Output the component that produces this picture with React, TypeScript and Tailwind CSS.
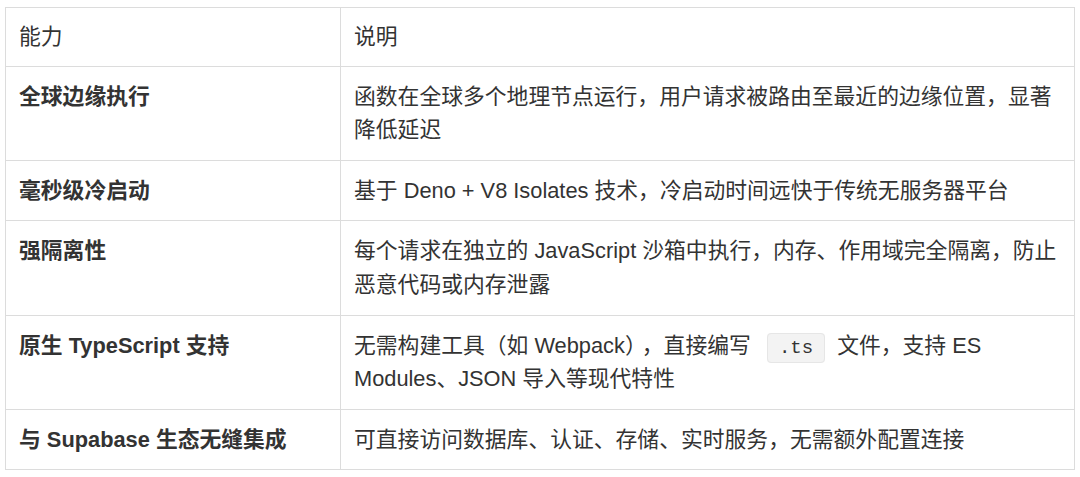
import type { ReactNode } from 'react'

const rows: { name: string; desc: ReactNode }[] = [
  {
    name: '全球边缘执行',
    desc: '函数在全球多个地理节点运行，用户请求被路由至最近的边缘位置，显著降低延迟',
  },
  {
    name: '毫秒级冷启动',
    desc: '基于 Deno + V8 Isolates 技术，冷启动时间远快于传统无服务器平台',
  },
  {
    name: '强隔离性',
    desc: '每个请求在独立的 JavaScript 沙箱中执行，内存、作用域完全隔离，防止恶意代码或内存泄露',
  },
  {
    name: '原生 TypeScript 支持',
    desc: (
      <>
        无需构建工具（如 Webpack）<span className="ml-[6px]">，</span>直接编写{' '}
        <code className="ml-[10px] mr-[6px] rounded-[4px] border border-[#e6e6e6] bg-[#f3f3f3] px-[11px] py-[3px] font-['Liberation_Mono',monospace] text-[19px] leading-none text-[#333]">
          .ts
        </code>{' '}
        文件，支持 ES Modules、JSON 导入等现代特性
      </>
    ),
  },
  {
    name: '与 Supabase 生态无缝集成',
    desc: '可直接访问数据库、认证、存储、实时服务，无需额外配置连接',
  },
]

export default function App() {
  return (
    <div className="h-[477px] w-[1080px] bg-white px-[5px] pt-[7px] font-['Liberation_Sans','Noto_Sans_CJK_SC',sans-serif] text-[21.8px] leading-[33.6px] text-[#333]">
      <table className="w-[1070px] table-fixed border-collapse">
        <colgroup>
          <col className="w-[335px]" />
          <col />
        </colgroup>
        <thead>
          <tr>
            <th className="border border-[#dcdcdc] px-[13px] py-[12px] text-left font-normal">能力</th>
            <th className="border border-[#dcdcdc] px-[13px] py-[12px] text-left font-normal">说明</th>
          </tr>
        </thead>
        <tbody>
          {rows.map((r) => (
            <tr key={r.name}>
              <td className="border border-[#dcdcdc] px-[13px] py-[13px] align-top font-bold">{r.name}</td>
              <td className="border border-[#dcdcdc] px-[13px] py-[13px] align-top">{r.desc}</td>
            </tr>
          ))}
        </tbody>
      </table>
    </div>
  )
}
